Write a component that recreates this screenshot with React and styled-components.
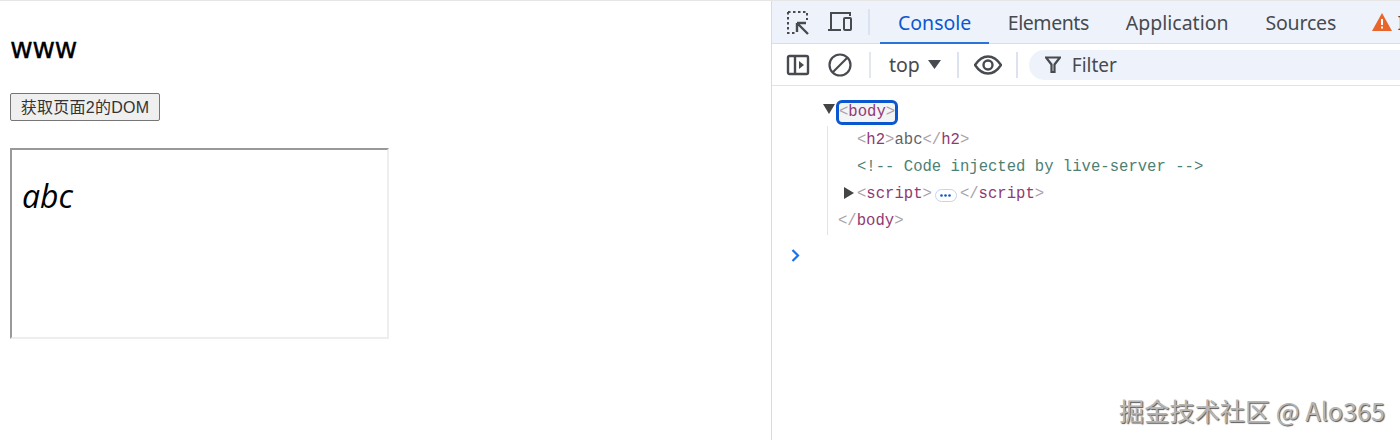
import React from "react";
import styled, { createGlobalStyle } from "styled-components";

const Global = createGlobalStyle`
  html, body { margin: 0; padding: 0; background: #fff; overflow: hidden; }
  body { font-family: "Liberation Sans", sans-serif; }
`;

const Page = styled.div`
  position: relative;
  width: 1400px;
  height: 440px;
  overflow: hidden;
  display: grid;
  grid-template-columns: 772px 628px;
  border-top: 1px solid #e6e6e6;
  box-sizing: border-box;
`;

const Left = styled.main`
  padding: 32px 0 0 10px;
  border-right: 1px solid #d6dbe2;
  box-sizing: border-box;
`;

const Heading = styled.h2`
  margin: 0;
  font: 400 28px/32px "DejaVu Sans", sans-serif;
  letter-spacing: -0.6px;
  -webkit-text-stroke: 0.3px #000;
  color: #000;
  height: 32px;
`;

const FetchButton = styled.button`
  display: block;
  margin-top: 28px;
  width: 150px;
  height: 28px;
  padding: 0 0 2px;
  font: 400 16px "Liberation Sans", "Noto Sans CJK SC", sans-serif;
  letter-spacing: 0.25px;
  color: #333;
  background: #efefef;
  border: 1px solid #767676;
  border-radius: 2px;
`;

const Frame = styled.div`
  margin-top: 27px;
  width: 375px;
  height: 187px;
  border-style: solid;
  border-width: 2px;
  border-color: #999 #eee #eee #999;
`;

const FrameTitle = styled.h2`
  margin: 28px 0 0 10px;
  font: italic 400 32px/36px "Open Sans", sans-serif;
  color: #000;
`;

const Devtools = styled.aside`
  display: flex;
  flex-direction: column;
  min-width: 0;
  overflow: hidden;
`;

const TabBar = styled.div`
  height: 42px;
  flex: none;
  display: flex;
  align-items: stretch;
  background: #eef3fb;
  border-bottom: 1px solid #d6dfec;
  padding-left: 14px;
  white-space: nowrap;
`;

const IconSlot = styled.span`
  display: flex;
  align-items: center;
  justify-content: center;
  flex: none;
  width: ${(p) => p.$w || 28}px;
  margin-right: ${(p) => p.$mr || 0}px;
`;

const VRule = styled.span`
  flex: none;
  align-self: center;
  width: 2px;
  height: ${(p) => p.$h || 26}px;
  background: ${(p) => p.$c || "#dbe3f0"};
  margin: 0 ${(p) => p.$mr || 0}px 0 ${(p) => p.$ml || 0}px;
`;

const Tab = styled.span`
  display: flex;
  align-items: center;
  padding: 0 ${(p) => p.$px || 18.5}px;
  font: 400 19.5px "Noto Sans", sans-serif;
  letter-spacing: ${(p) => p.$track || 0}px;
  color: ${(p) => (p.$active ? "#0b57d0" : "#474a4f")};
  box-shadow: ${(p) => (p.$active ? "inset 0 -2px 0 #2a73d8" : "none")};
  margin-bottom: -1px;
`;

const Warning = styled.span`
  display: flex;
  align-items: center;
  gap: 6px;
  margin-left: 17px;
  font: 400 19.5px "Noto Sans", sans-serif;
  color: #474a4f;
`;

const Toolbar = styled.div`
  height: 41px;
  flex: none;
  display: flex;
  align-items: center;
  padding-left: 14px;
  border-bottom: 1px solid #dfe3ea;
  white-space: nowrap;
`;

const ContextSelect = styled.span`
  display: flex;
  align-items: center;
  gap: 8px;
  margin-right: 16px;
  font: 400 19.5px "Noto Sans", sans-serif;
  color: #474a4f;
`;

const Filter = styled.div`
  flex: 1;
  align-self: center;
  height: 30px;
  display: flex;
  align-items: center;
  gap: 11px;
  padding-left: 16px;
  background: #eef3fb;
  border-radius: 15px 0 0 15px;
  font: 400 19px "Noto Sans", sans-serif;
  color: #474a4f;
`;

const Console = styled.div`
  padding: 13px 0 0 0;
  font: 400 15.6px/27px "Liberation Mono", monospace;
  color: #a9a1a8;
`;

const Tree = styled.div`
  margin-left: 55px;
  padding-top: 1px;
  border-left: 1px solid #e4e4e4;
`;

const Line = styled.div`
  display: flex;
  align-items: center;
  height: 27px;
  padding-left: ${(p) => p.$indent}px;
  white-space: pre;
`;

const RootLine = styled(Line)`
  margin-left: 51px;
  padding-left: 0;
`;

const Caret = styled.span`
  flex: none;
  width: 0;
  height: 0;
  margin-right: ${(p) => p.$mr}px;
  ${(p) =>
    p.$open
      ? "border-left:6px solid transparent;border-right:6px solid transparent;border-top:10px solid #444;margin-bottom:7px;"
      : "border-top:6px solid transparent;border-bottom:6px solid transparent;border-left:10px solid #444;margin-bottom:4px;"}
`;

const Focused = styled.span`
  display: inline-block;
  height: 19px;
  line-height: 19px;
  background: #f3f4f6;
  border: 3px solid #0b57d0;
  border-radius: 6px;
  margin-left: -3px;
`;

const Tag = styled.span`
  color: #8f3a74;
`;

const Comment = styled.span`
  color: #4d7f74;
`;

const Text = styled.span`
  color: #5f6368;
`;

const Ellipsis = styled.span`
  display: inline-flex;
  align-items: center;
  justify-content: center;
  width: 22px;
  height: 13px;
  margin: 2px 3px 0 3px;
  border: 1px solid #c3d4f0;
  border-radius: 7px;
  box-sizing: border-box;
`;

const Prompt = styled.div`
  display: flex;
  margin: 14px 0 0 19px;
`;

const Watermark = styled.div`
  position: absolute;
  right: 15px;
  bottom: 15px;
  font: 400 25.2px/30px "Noto Sans CJK SC", sans-serif;
  color: #b5b5b5;
  text-shadow: 1px 1px 1px #555;
`;

const ink = "#474a4f";

export default function App() {
  return (
    <Page>
      <Global />
      <Left>
        <Heading>www</Heading>
        <FetchButton>获取页面2的DOM</FetchButton>
        <Frame>
          <FrameTitle>abc</FrameTitle>
        </Frame>
      </Left>
      <Devtools>
        <TabBar>
          <IconSlot $w={28} $mr={13}>
            <svg width="26" height="26" viewBox="0 0 26 26" fill="none" stroke={ink} strokeWidth="2" style={{ marginLeft: -2 }}>
              <path d="M2 3h19v8M2 3v21h8" strokeDasharray="2.5 2.500" />
              <path d="M11 14l11 11M11 14v9M11 14h9" strokeWidth="2.4" />
            </svg>
          </IconSlot>
          <IconSlot $w={26} $mr={15}>
            <svg width="26" height="24" viewBox="0 0 26 24" fill="none" stroke={ink} strokeWidth="2">
              <path d="M4 19V3h19v3" />
              <path d="M1 20h13" />
              <rect x="17" y="8" width="7" height="12" rx="1" />
            </svg>
          </IconSlot>
          <VRule $mr={10} />
          <Tab $active $px={18}>Console</Tab>
          <Tab $track={-0.45}>Elements</Tab>
          <Tab>Application</Tab>
          <Tab $track={-0.2}>Sources</Tab>
          <Warning>
            <svg width="20" height="18" viewBox="0 0 20 18">
              <path d="M10 0L20 18H0z" fill="#e8652b" />
              <path d="M9 6h2v6H9zM9 13.500h2v2H9z" fill="#fff" />
            </svg>
            I
          </Warning>
        </TabBar>
        <Toolbar>
          <IconSlot $w={24} $mr={18}>
            <svg width="24" height="22" viewBox="0 0 24 22" fill="none" stroke={ink} strokeWidth="2.4">
              <rect x="2" y="2" width="20" height="18" rx="1.500" />
              <path d="M9 2v18" />
              <path d="M13 7l5 4-5 4z" fill={ink} stroke="none" />
            </svg>
          </IconSlot>
          <IconSlot $w={24} $mr={17}>
            <svg width="24" height="24" viewBox="0 0 24 24" fill="none" stroke={ink} strokeWidth="2.2">
              <circle cx="12" cy="12" r="10.500" />
              <path d="M5 19L19 5" />
            </svg>
          </IconSlot>
          <VRule $mr={18} $c="#e3e7ee" />
          <ContextSelect>
            top
            <svg width="13" height="9" viewBox="0 0 13 9">
              <path d="M0 0h13L6.500 9z" fill={ink} />
            </svg>
          </ContextSelect>
          <VRule $mr={15} />
          <IconSlot $w={28} $mr={14}>
            <svg width="28" height="20" viewBox="0 0 28 20" fill="none" stroke={ink} strokeWidth="2.4">
              <path d="M1 10C5 4 9 1.500 14 1.500S23 4 27 10c-4 6-8 8.500-13 8.500S5 16 1 10z" />
              <circle cx="14" cy="10" r="4.500" />
            </svg>
          </IconSlot>
          <VRule $mr={11} />
          <Filter>
            <svg width="16" height="17" viewBox="0 0 16 17" fill="none" stroke={ink} strokeWidth="2.2">
              <path d="M1 1.500h14L9.500 8.500V16h-3V8.500z" />
            </svg>
            Filter
          </Filter>
        </Toolbar>
        <Console>
          <RootLine>
            <Caret $open $mr={4} />
            <Focused>
              &lt;<Tag>body</Tag>&gt;
            </Focused>
          </RootLine>
          <Tree>
            <Line $indent={29}>
              &lt;<Tag>h2</Tag>&gt;<Text>abc</Text>&lt;/<Tag>h2</Tag>&gt;
            </Line>
            <Line $indent={29}>
              <Comment>&lt;!-- Code injected by live-server --&gt;</Comment>
            </Line>
            <Line $indent={16}>
              <Caret $mr={3} />
              &lt;<Tag>script</Tag>&gt;
              <Ellipsis>
                <svg width="11" height="3" viewBox="0 0 11 3">
                  <circle cx="1.500" cy="1.500" r="1.300" fill="#0b57d0" />
                  <circle cx="5.500" cy="1.500" r="1.300" fill="#0b57d0" />
                  <circle cx="9.500" cy="1.500" r="1.300" fill="#0b57d0" />
                </svg>
              </Ellipsis>
              &lt;/<Tag>script</Tag>&gt;
            </Line>
            <Line $indent={10}>
              &lt;/<Tag>body</Tag>&gt;
            </Line>
          </Tree>
          <Prompt>
            <svg width="9" height="13" viewBox="0 0 9 13" fill="none" stroke="#1a73e8" strokeWidth="2.2">
              <path d="M1.500 1l5.500 5.500L1.500 12" />
            </svg>
          </Prompt>
        </Console>
      </Devtools>
      <Watermark>掘金技术社区 @ Alo365</Watermark>
    </Page>
  );
}
